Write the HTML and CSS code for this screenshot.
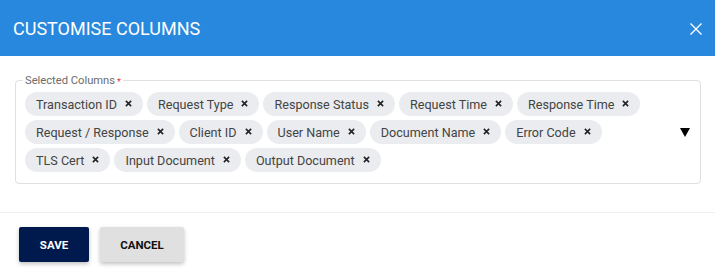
FILE: index.html
```html
<!DOCTYPE html>
<html lang="en">
<head>
    <meta charset="UTF-8">
    <meta name="viewport" content="width=device-width, initial-scale=1.0">
    <title>Customise Columns</title>
    <link rel="stylesheet" href="styles.css">
</head>
<body>

    <div class="dialog">
        <div class="dialog-header">
            <h1>CUSTOMISE COLUMNS</h1>
            <svg class="close-icon" width="12" height="12" viewBox="0 0 12 12">
                <path d="M0.5 0.5 L11.5 11.5 M11.5 0.5 L0.5 11.5" stroke="#ffffff" stroke-width="1.4" fill="none"/>
            </svg>
        </div>

        <div class="dialog-body">
            <fieldset class="select-box">
                <legend>Selected Columns<span class="required">*</span></legend>
                <div class="select-inner">
                    <div class="chips">
                        <span class="chip">Transaction ID <svg class="chip-x" viewBox="0 0 8 8"><path d="M1 1 L7 7 M7 1 L1 7"/></svg></span>
                        <span class="chip">Request Type <svg class="chip-x" viewBox="0 0 8 8"><path d="M1 1 L7 7 M7 1 L1 7"/></svg></span>
                        <span class="chip">Response Status <svg class="chip-x" viewBox="0 0 8 8"><path d="M1 1 L7 7 M7 1 L1 7"/></svg></span>
                        <span class="chip">Request Time <svg class="chip-x" viewBox="0 0 8 8"><path d="M1 1 L7 7 M7 1 L1 7"/></svg></span>
                        <span class="chip">Response Time <svg class="chip-x" viewBox="0 0 8 8"><path d="M1 1 L7 7 M7 1 L1 7"/></svg></span>
                        <span class="chip">Request / Response <svg class="chip-x" viewBox="0 0 8 8"><path d="M1 1 L7 7 M7 1 L1 7"/></svg></span>
                        <span class="chip">Client ID <svg class="chip-x" viewBox="0 0 8 8"><path d="M1 1 L7 7 M7 1 L1 7"/></svg></span>
                        <span class="chip">User Name <svg class="chip-x" viewBox="0 0 8 8"><path d="M1 1 L7 7 M7 1 L1 7"/></svg></span>
                        <span class="chip">Document Name <svg class="chip-x" viewBox="0 0 8 8"><path d="M1 1 L7 7 M7 1 L1 7"/></svg></span>
                        <span class="chip">Error Code <svg class="chip-x" viewBox="0 0 8 8"><path d="M1 1 L7 7 M7 1 L1 7"/></svg></span>
                        <span class="chip">TLS Cert <svg class="chip-x" viewBox="0 0 8 8"><path d="M1 1 L7 7 M7 1 L1 7"/></svg></span>
                        <span class="chip">Input Document <svg class="chip-x" viewBox="0 0 8 8"><path d="M1 1 L7 7 M7 1 L1 7"/></svg></span>
                        <span class="chip">Output Document <svg class="chip-x" viewBox="0 0 8 8"><path d="M1 1 L7 7 M7 1 L1 7"/></svg></span>
                    </div>
                    <span class="arrow"></span>
                </div>
            </fieldset>
        </div>

        <div class="dialog-footer">
            <button class="btn btn-save">SAVE</button>
            <button class="btn btn-cancel">CANCEL</button>
        </div>
    </div>

</body>
</html>
```

FILE: styles.css
```css
body {
    font-family: Roboto, 'Liberation Sans', sans-serif;
    margin: 0;
    padding: 0;
    background: #ffffff;
    color: #333;
}

/* ヘッダー */
.dialog-header {
    height: 56px;
    background: #2888de;
    display: flex;
    align-items: center;
    justify-content: space-between;
    padding: 0 13px 0 13px;
}

.dialog-header h1 {
    margin: 0;
    font-size: 18px;
    font-weight: 400;
    color: #ffffff;
}

.close-icon {
    margin-top: 1px;
}

.dialog-body {
    padding: 18px 14px 28px 15px;
}

.select-box {
    margin: 0;
    padding: 5px 10px 11px 9px;
    border: 1px solid #e0e0e0;
    border-radius: 4px;
}

.select-box legend {
    font-size: 11.2px;
    color: #6b6b6b;
    padding: 0 2px;
    margin-left: -2px;
}

.required {
    color: #e53935;
    margin-left: 2px;
    font-size: 9px;
    vertical-align: -1px;
}

.select-inner {
    display: flex;
    align-items: center;
}

.chips {
    flex: 1;
    display: flex;
    flex-wrap: wrap;
    gap: 4px;
    margin-right: 14px;
}

.chip {
    height: 24px;
    display: flex;
    align-items: center;
    padding: 0 11px;
    border-radius: 12px;
    background: #eaecef;
    font-size: 12.6px;
    color: #444;
    white-space: nowrap;
}

.chip-x {
    width: 7px;
    height: 7px;
    margin-left: 8px;
    margin-top: -1px;
    stroke: #222;
    stroke-width: 1.8;
    fill: none;
}

.arrow {
    width: 0;
    height: 0;
    border-left: 5px solid transparent;
    border-right: 5px solid transparent;
    border-top: 9px solid #000;
}

/* フッター */
.dialog-footer {
    border-top: 1px solid #efefef;
    padding: 14px 19px;
    display: flex;
    gap: 11px;
}

.btn {
    height: 35px;
    border: none;
    border-radius: 2px;
    font-family: Roboto, 'Liberation Sans', sans-serif;
    font-size: 11.5px;
    font-weight: bold;
    box-shadow: 0 2px 4px rgba(0, 0, 0, 0.25);
    cursor: pointer;
}

.btn-save {
    width: 70px;
    background: #001a4e;
    color: #ffffff;
}

.btn-cancel {
    width: 84px;
    background: #e0e0e0;
    color: #111;
}
```
